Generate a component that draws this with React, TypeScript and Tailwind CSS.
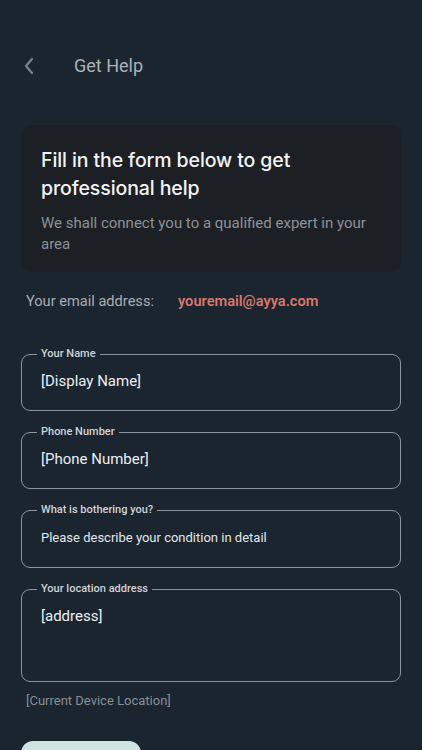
import React from "react";

function Field({
  label,
  value,
  contentClass,
}: {
  label: string;
  value: string;
  contentClass: string;
}) {
  return (
    <fieldset className="border border-[#8e959c] rounded-[9px] px-[15px] m-0 min-w-0">
      <legend className="px-1 text-[11px] leading-[14px] text-[#d0d3d6] font-medium">{label}</legend>
      <div className={`pl-1 ${contentClass}`}>{value}</div>
    </fieldset>
  );
}

export default function App() {
  return (
    <div
      className="w-[422px] h-[750px] overflow-hidden bg-[#1a2530] text-white"
      style={{ fontFamily: "Roboto, 'Noto Sans', sans-serif" }}
    >
      <div className="flex items-center h-[36px] mt-[48px] pl-[22px]">
        <svg width="14" height="18" viewBox="0 0 14 18" fill="none">
          <path d="M10 2 L4 9 L10 16" stroke="#7c8288" strokeWidth="2.2" strokeLinecap="round" strokeLinejoin="round" />
        </svg>
        <span className="ml-[38px] text-[18px] leading-6 text-[#aeb2b6]">Get Help</span>
      </div>

      <div className="px-[21px]">
        <div className="mt-[41px] rounded-[10px] bg-[#1c2025] pl-5 pr-5 pt-[21px] pb-[17px]">
          <div
            className="text-[19.5px] leading-[28px] text-[#f2f3f4] font-medium tracking-[-0.1px]"
            style={{ fontFamily: "Inter, 'Noto Sans', sans-serif" }}
          >
            Fill in the form below to get professional help
          </div>
          <div className="mt-[11px] text-[15px] leading-[21px] text-[#8d9195]">
            We shall connect you to a qualified expert in your area
          </div>
        </div>

        <div className="mt-[19px] flex items-center pl-[5px] text-[14.6px] leading-5">
          <span className="text-[#a9adb1]">Your email address:</span>
          <span className="ml-[24px] font-semibold text-[#d9786a]">youremail@ayya.com</span>
        </div>

        <div className="mt-[36px] flex flex-col gap-[14px]">
          <Field
            label="Your Name"
            value="[Display Name]"
            contentClass="pt-[10px] pb-[19px] text-[15px] leading-5 text-[#eceef0]"
          />
          <Field
            label="Phone Number"
            value="[Phone Number]"
            contentClass="pt-[10px] pb-[19px] text-[15px] leading-5 text-[#eceef0]"
          />
          <Field
            label="What is bothering you?"
            value="Please describe your condition in detail"
            contentClass="pt-[11px] pb-[19px] text-[13px] leading-5 text-[#e4e6e8]"
          />
          <Field
            label="Your location address"
            value="[address]"
            contentClass="pt-[10px] pb-[55px] text-[15px] leading-5 text-[#eceef0]"
          />
        </div>

        <div className="mt-[11px] pl-[5px] text-[13px] leading-4 text-[#8a8f94]">[Current Device Location]</div>

        <button className="mt-[32px] w-[120px] h-[48px] rounded-[12px] bg-[#cfe4e0] text-[#1a2530] text-[15px] font-semibold">
          Submit
        </button>
      </div>
    </div>
  );
}
